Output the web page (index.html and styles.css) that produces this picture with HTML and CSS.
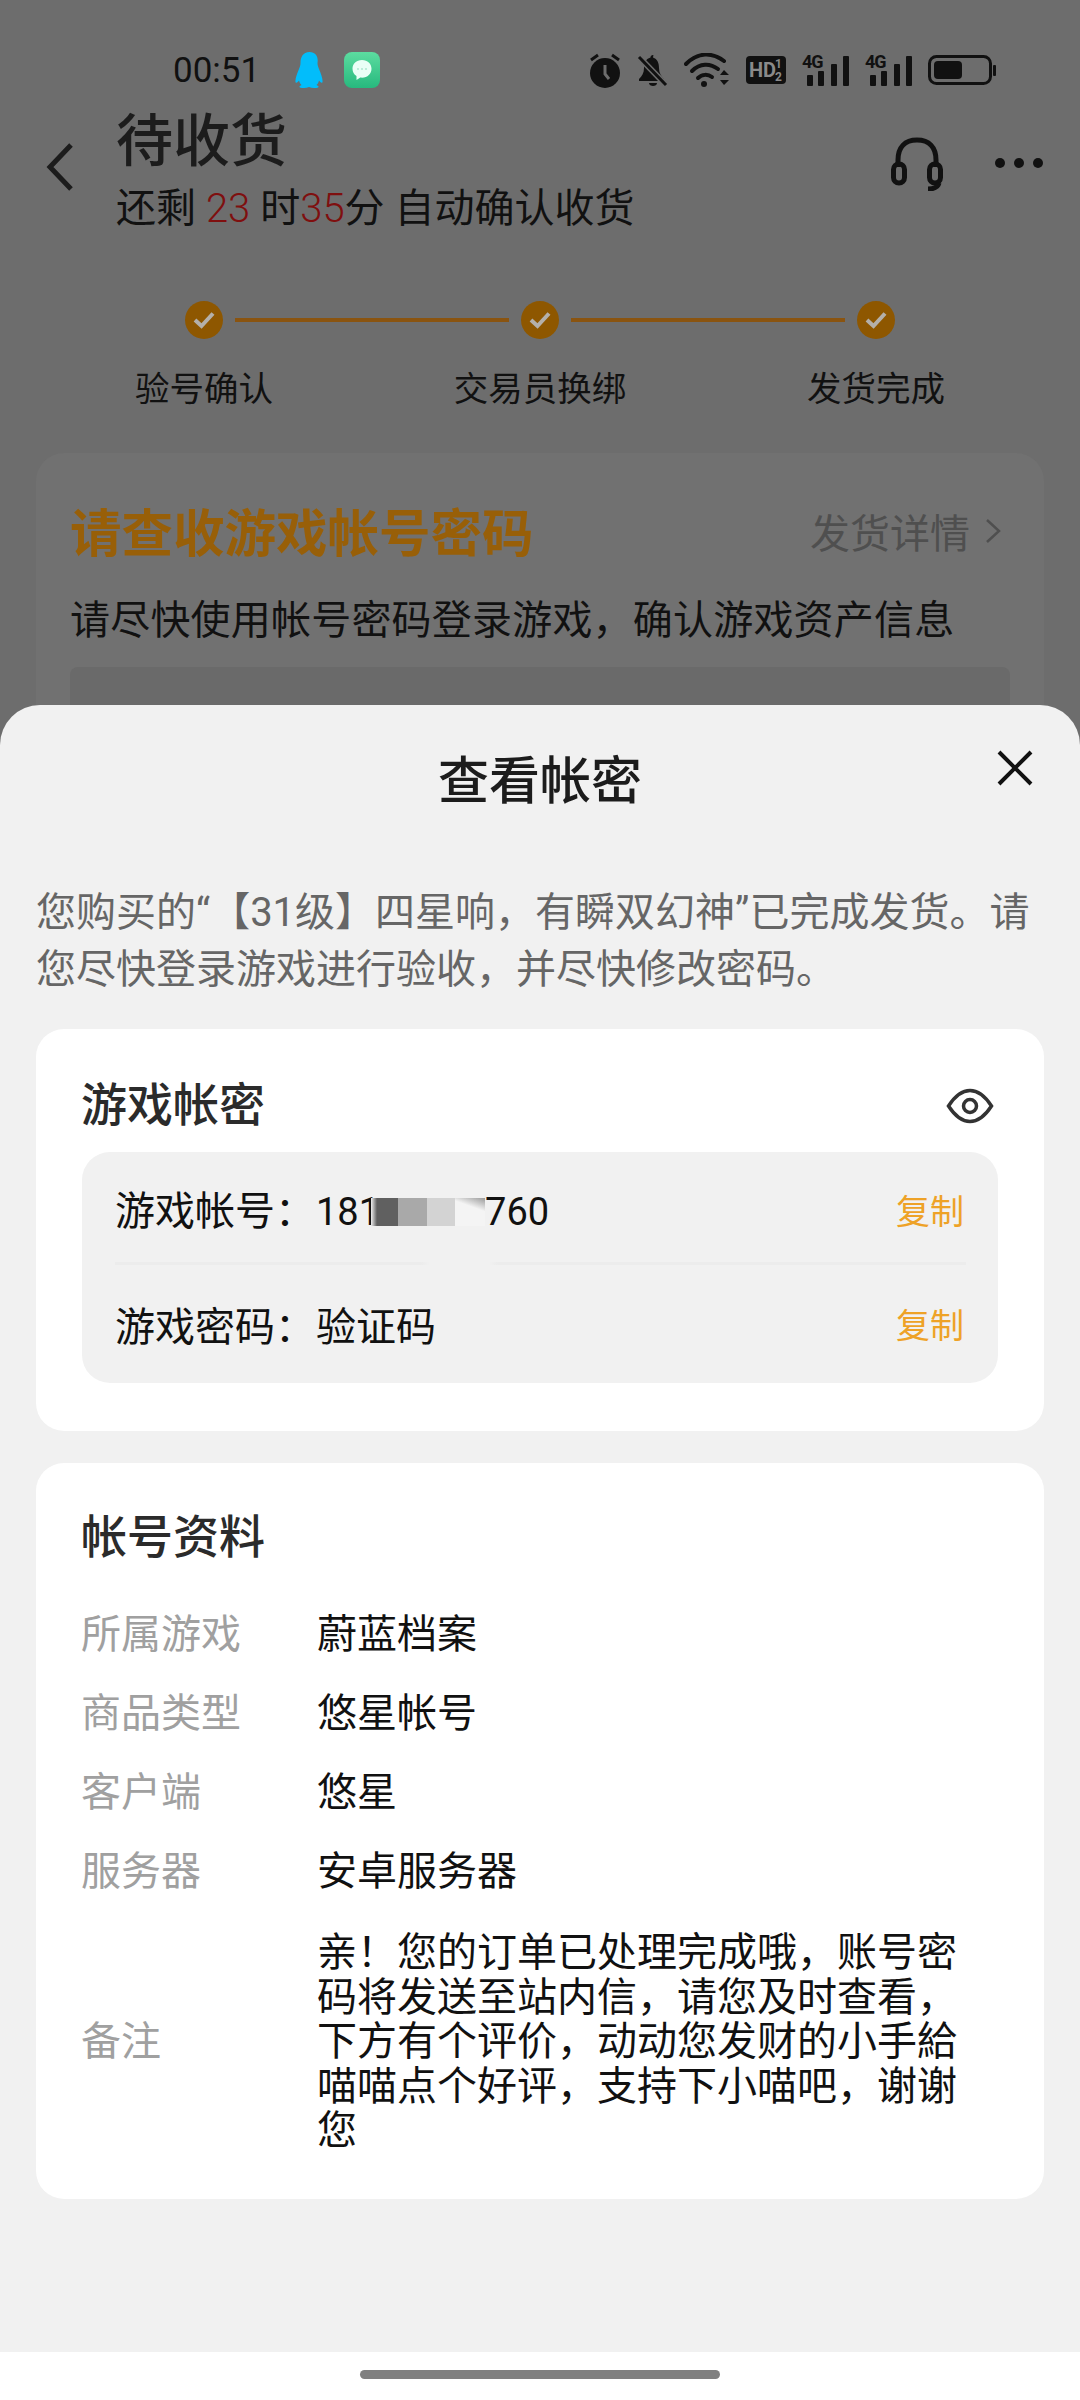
FILE: index.html
```html
<!DOCTYPE html>
<html lang="zh">
<head>
  <meta charset="utf-8">
  <title>查看帐密</title>
  <link rel="stylesheet" href="styles.css">
</head>
<body>
  <div class="page">
    <div class="backdrop">
      <div class="status">
        <span class="time">00:51</span>
        <svg class="qq" width="29" height="36" viewBox="0 0 29 36"><path fill="#02bdfb" d="M14.5 0C8 0 5.5 5 5.5 11c0 2-.5 3.5-1.500 6C2 22 0 27 .5 30c.5 2 2.500 0 3.500-1.500.5 2 1 3 2.500 4.500-2 1-3 2-1 2.700 3 .6 6 .3 8.500-.7 2.500 1 5.500 1.300 8.500.7 2-.7 1-1.700-1-2.700 1.500-1.500 2-2.500 2.500-4.500 1 1.500 3 3.500 3.500 1.500.5-3-1.500-8-3.500-13-1-2.500-1.500-4-1.500-6C23.500 5 21 0 14.500 0z"/></svg>
        <svg class="msg" width="36" height="36" viewBox="0 0 36 36">
          <defs><linearGradient id="msgGreen" x1="0" y1="0" x2="0" y2="1"><stop offset="0" stop-color="#5cdca0"/><stop offset="1" stop-color="#27b97e"/></linearGradient></defs>
          <rect width="36" height="36" rx="8" fill="url(#msgGreen)"/>
          <path fill="#eafff6" d="M18 8c-5.600 0-9.500 3.900-9.500 8.800 0 3.200 1.500 5.700 4 7.300v4l3.800-2.500c.5.100 1.100.100 1.700.100 5.600 0 9.500-3.900 9.500-8.900S23.600 8 18 8z"/>
          <circle cx="14" cy="17" r=".9" fill="#a9e6cc"/><circle cx="18" cy="17" r=".9" fill="#a9e6cc"/><circle cx="22" cy="17" r=".9" fill="#a9e6cc"/>
        </svg>
        <span class="status-gap"></span>
        <svg width="32" height="35" viewBox="0 0 32 35" fill="#111"><circle cx="16" cy="20" r="15"/><path d="M2 7l7-5M30 7l-7-5" stroke="#111" stroke-width="3" fill="none"/><path d="M16 12v9l4 5" stroke="#6d6d6d" stroke-width="3" fill="none"/></svg>
        <svg width="31" height="35" viewBox="0 0 31 35" fill="#111"><path d="M16 2c-1.500 0-2.500 1-2.500 2.500C8.500 6 7 10 7 15c0 5-2 8-5 11v2h25v-2c-3-3-5-6-5-11 0-5-1.500-9-6-10.500C16 3 17 2 16 2z"/><path d="M12 30h8c0 4-8 4-8 0z"/><path d="M2 4l27 28" stroke="#6d6d6d" stroke-width="6"/><path d="M2 4l27 28" stroke="#111" stroke-width="3"/></svg>
        <svg width="46" height="34" viewBox="0 0 46 34" fill="none" stroke="#111" stroke-linecap="round" stroke-width="4"><path d="M2 11C14-1 28-1 40 8"/><path d="M8 18c8-8 18-8 26-2"/><path d="M14 25c4-4 10-4 14-1"/><circle cx="20" cy="31" r="3" fill="#111" stroke="none"/><path d="M36 22l4-5 5 5zM36 27l4 5 5-5z" fill="#111" stroke="none"/></svg>
        <svg width="40" height="28" viewBox="0 0 40 28"><rect width="40" height="28" rx="4" fill="#111"/><text class="ico-hd" x="3" y="21">HD</text><text class="ico-half" x="29" y="12">1</text><text class="ico-half" x="29" y="25">2</text></svg>
        <div class="sig">
          <span class="sig-label">4G</span>
          <svg width="47" height="31" viewBox="0 0 47 31" fill="#111"><rect x="5" y="20" width="6" height="11" rx="1"/><rect x="16" y="16" width="6" height="15" rx="1"/><rect x="29" y="9" width="6" height="22" rx="1"/><rect x="41" y="1" width="6" height="30" rx="1"/></svg>
        </div>
        <div class="sig">
          <span class="sig-label">4G</span>
          <svg width="47" height="31" viewBox="0 0 47 31" fill="#111"><rect x="5" y="20" width="6" height="11" rx="1"/><rect x="16" y="16" width="6" height="15" rx="1"/><rect x="29" y="9" width="6" height="22" rx="1"/><rect x="41" y="1" width="6" height="30" rx="1"/></svg>
        </div>
        <svg width="68" height="30" viewBox="0 0 68 30"><rect x="1.500" y="1.500" width="61" height="27" rx="7" fill="none" stroke="#111" stroke-width="3"/><rect x="6" y="6" width="28" height="18" rx="4" fill="#111"/><rect x="65" y="10" width="3" height="11" rx="1" fill="#111"/></svg>
      </div>

      <div class="topbar">
        <svg class="back" width="28" height="50" viewBox="0 0 28 50"><path d="M25 3L4 25l21 22" fill="none" stroke="#1c1c1c" stroke-width="5"/></svg>
        <div class="topbar-text">
          <div class="order-state">待收货</div>
          <div class="countdown">还剩 <em>23</em> 时<em>35</em>分 自动确认收货</div>
        </div>
        <svg class="headset" width="54" height="54" viewBox="0 0 54 54" fill="none" stroke="#111"><path d="M8 30V23C8 10 15 3 27 3s19 7 19 20v7" stroke-width="5"/><rect x="3.500" y="27" width="11" height="19" rx="5.500" stroke-width="5"/><rect x="39.500" y="27" width="11" height="19" rx="5.500" stroke-width="5"/><path d="M49 46c-1 4-5 6-11 6" stroke-width="5"/></svg>
        <div class="more"><i></i><i></i><i></i></div>
      </div>

      <div class="track">
        <span class="tick"><svg width="22" height="18" viewBox="0 0 22 18"><path d="M2 9l6.500 6L20 2.500" fill="none" stroke="#b4b0aa" stroke-width="4"/></svg></span>
        <span class="track-line"></span>
        <span class="tick"><svg width="22" height="18" viewBox="0 0 22 18"><path d="M2 9l6.500 6L20 2.500" fill="none" stroke="#b4b0aa" stroke-width="4"/></svg></span>
        <span class="track-line"></span>
        <span class="tick"><svg width="22" height="18" viewBox="0 0 22 18"><path d="M2 9l6.500 6L20 2.500" fill="none" stroke="#b4b0aa" stroke-width="4"/></svg></span>
      </div>
      <div class="track-labels">
        <span>验号确认</span>
        <span>交易员换绑</span>
        <span>发货完成</span>
      </div>

      <div class="dim-card">
        <div class="dim-card-head">
          <span class="dim-title">请查收游戏帐号密码</span>
          <span class="dim-link">发货详情
            <svg width="16" height="26" viewBox="0 0 16 26"><path d="M2 2l12 11L2 24" fill="none" stroke="#4f4f4f" stroke-width="2.500"/></svg>
          </span>
        </div>
        <div class="dim-text">请尽快使用帐号密码登录游戏，确认游戏资产信息</div>
        <div class="dim-box"></div>
      </div>
    </div>

    <div class="sheet">
      <div class="sheet-head">
        <span></span>
        <h1>查看帐密</h1>
        <svg class="close" width="36" height="36" viewBox="0 0 36 36"><path d="M2 2l32 32M34 2L2 34" stroke="#111" stroke-width="4"/></svg>
      </div>
      <p class="notice">您购买的“【31级】四星响，有瞬双幻神”已完成发货。请您尽快登录游戏进行验收，并尽快修改密码。</p>

      <section class="card">
        <div class="card-head">
          <h2>游戏帐密</h2>
          <svg class="eye" width="48" height="36" viewBox="0 0 48 36" fill="none" stroke="#333" stroke-width="3.500"><path d="M2.500 18C9 8 16 2.500 24 2.500S39 8 45.500 18C39 28 32 33.500 24 33.500S9 28 2.500 18z"/><circle cx="24" cy="18" r="6.500"/></svg>
        </div>
        <div class="cred-box">
          <div class="cred-row first">
            <span class="cred-text">游戏帐号：<span class="digits">181<span class="mosaic"><i class="m1"></i><i class="m2"></i><i class="m3"></i><i class="m4"></i></span>760</span></span>
            <span class="copy">复制</span>
          </div>
          <div class="cred-row">
            <span class="cred-text">游戏密码：<span>验证码</span></span>
            <span class="copy">复制</span>
          </div>
        </div>
      </section>

      <section class="card info">
        <h2>帐号资料</h2>
        <div class="info-row"><span class="info-label">所属游戏</span><span class="info-value">蔚蓝档案</span></div>
        <div class="info-row"><span class="info-label">商品类型</span><span class="info-value">悠星帐号</span></div>
        <div class="info-row"><span class="info-label">客户端</span><span class="info-value">悠星</span></div>
        <div class="info-row"><span class="info-label">服务器</span><span class="info-value">安卓服务器</span></div>
        <div class="info-row note"><span class="info-label">备注</span><span class="info-value">亲！您的订单已处理完成哦，账号密码将发送至站内信，请您及时查看，下方有个评价，动动您发财的小手給喵喵点个好评，支持下小喵吧，谢谢您</span></div>
      </section>
    </div>

    <div class="navbar"><span class="home-bar"></span></div>
  </div>
</body>
</html>
```

FILE: styles.css
```css
* {
  box-sizing: border-box;
}

body {
  margin: 0;
  font-family: Roboto, "Noto Sans CJK SC", sans-serif;
  color: #111;
  text-spacing-trim: space-all;
}

h1, h2, p {
  margin: 0;
  font-weight: 500;
}

.page {
  width: 1080px;
  height: 2400px;
  overflow: hidden;
  display: flex;
  flex-direction: column;
  background: #fff;
}

/* dimmed order page behind the sheet */
.backdrop {
  height: 745px;
  flex: none;
  overflow: hidden;
  background: #6d6d6d;
}

.status {
  height: 112px;
  padding: 28px 84px 0 173px;
  display: flex;
  align-items: center;
  gap: 16px;
}

.time {
  font-size: 35px;
  width: 106px;
}

.msg {
  margin-left: 4px;
}

.status-gap {
  flex: 1;
}

.ico-hd {
  font-family: Roboto, sans-serif;
  font-size: 20px;
  font-weight: 700;
  fill: #8a8a8a;
}

.ico-half {
  font-family: Roboto, sans-serif;
  font-size: 12px;
  font-weight: 700;
  fill: #8a8a8a;
}

.sig {
  width: 47px;
  height: 31px;
  position: relative;
}

.sig svg {
  display: block;
}

.sig-label {
  position: absolute;
  left: 0;
  top: -2px;
  font-size: 18px;
  line-height: 18px;
  font-weight: 700;
  letter-spacing: -1px;
}

.topbar {
  height: 118px;
  display: flex;
  align-items: flex-start;
  padding-left: 46px;
}

.back {
  margin-top: 30px;
}

.topbar-text {
  margin-left: 42px;
  flex: 1;
}

.order-state {
  font-size: 57px;
  line-height: 60px;
  font-weight: 500;
  color: #1c1c1c;
}

.countdown {
  margin-top: 12px;
  font-size: 40px;
  line-height: 50px;
}

.countdown em {
  font-style: normal;
  font-weight: 300;
  color: #7f0f0f;
}

.headset {
  margin-top: 25px;
  margin-right: 51px;
}

.more {
  display: flex;
  gap: 9px;
  margin-top: 46px;
  margin-right: 37px;
}

.more i {
  width: 10px;
  height: 10px;
  border-radius: 50%;
  background: #111;
}

.track {
  margin-top: 71px;
  padding: 0 185px;
  display: flex;
  align-items: center;
  gap: 12px;
}

.tick {
  width: 38px;
  height: 38px;
  flex: none;
  border-radius: 50%;
  background: #8e5700;
  display: flex;
  align-items: center;
  justify-content: center;
}

.track-line {
  flex: 1;
  height: 4px;
  background: #8a5410;
}

.track-labels {
  margin-top: 25px;
  padding: 0 36px;
  display: grid;
  grid-template-columns: repeat(3, 1fr);
  text-align: center;
  font-size: 34.500px;
  line-height: 50px;
}

.dim-card {
  margin: 39px 36px 0;
  padding: 48px 34px 0;
  height: 400px;
  background: #717171;
  border-radius: 28px;
}

.dim-card-head {
  display: flex;
  align-items: center;
  justify-content: space-between;
  height: 60px;
}

.dim-title {
  margin-top: -4px;
  font-size: 51.500px;
  font-weight: 700;
  color: #985f08;
}

.dim-link {
  font-size: 40px;
  color: #4f4f4f;
  display: flex;
  align-items: center;
  gap: 15px;
  margin-right: 9px;
}

.dim-text {
  margin-top: 32px;
  font-size: 40px;
  line-height: 56px;
  letter-spacing: .2px;
}

.dim-box {
  margin-top: 18px;
  height: 120px;
  background: #6a6a6a;
  border-radius: 8px;
}

/* bottom sheet */
.sheet {
  margin-top: -40px;
  height: 1647px;
  flex: none;
  padding: 0 36px;
  background: #f1f1f1;
  border-radius: 40px 40px 0 0;
}

.sheet-head {
  height: 148px;
  margin: 0 -36px;
  display: grid;
  grid-template-columns: 1fr auto 1fr;
  align-items: center;
}

.sheet-head h1 {
  margin-top: 6px;
  font-size: 51px;
  line-height: 60px;
  color: #1c1c1c;
}

.close {
  justify-self: end;
  margin: -22px 47px 0 0;
}

.notice {
  margin-top: 31px;
  font-size: 40px;
  line-height: 57px;
  font-weight: 400;
  color: #666;
}

.card {
  margin-top: 31px;
  height: 402px;
  padding: 44px 46px 0 45px;
  background: #fff;
  border-radius: 28px;
}

.card h2 {
  font-size: 46px;
  line-height: 60px;
  color: #2b2b2b;
}

.card-head {
  height: 60px;
  display: flex;
  justify-content: space-between;
  align-items: center;
}

.card-head h2 {
  margin-top: 3px;
}

.eye {
  margin-right: 4px;
  margin-top: 6px;
}

.cred-box {
  margin: 19px 0 0 1px;
  height: 231px;
  padding: 0 32px 0 33px;
  background: #f1f1f1;
  border-radius: 28px;
}

.cred-row {
  height: 119px;
  padding-bottom: 2px;
  display: flex;
  align-items: center;
  justify-content: space-between;
  font-size: 40px;
}

.cred-row.first {
  height: 113px;
  padding: 1px 0 0;
  border-bottom: 3px solid;
  border-image: linear-gradient(90deg, #ececec 0, #ececec 36%, #f1f1f1 37%, #f1f1f1 44%, #ececec 45%, #ececec 100%) 1;
}

.cred-row.first .copy {
  margin-top: 4px;
}

.cred-text > span {
  margin-left: 1px;
}

.digits {
  font-size: 38px;
}

/* blurred part of the account number */
.mosaic {
  display: inline-flex;
  vertical-align: -1px;
  height: 28px;
  margin-left: -9px;
}

.mosaic i {
  display: block;
  height: 28px;
  width: 28px;
}

.mosaic .m1 {
  width: 27px;
  background: linear-gradient(90deg, #f1f1f1 0, #606060 6px);
}

.mosaic .m2 {
  width: 29px;
  background: #a9a9a9;
}

.mosaic .m3 {
  background: #d3d3d3;
}

.mosaic .m4 {
  width: 30px;
  background: linear-gradient(200deg, #9a9a9a 0, #f4f4f4 35%);
}

.copy {
  font-size: 34px;
  color: #eea227;
  padding-right: 2px;
}

.card.info {
  margin-top: 32px;
  height: 736px;
  padding-top: 44px;
}

.info h2 {
  margin-bottom: 24px;
}

.info-row {
  min-height: 79px;
  display: flex;
  align-items: center;
  font-size: 40px;
}

.info-label {
  width: 236px;
  flex: none;
  color: #a0a0a0;
}

.info-value {
  color: #111;
}

.info-row.note {
  margin-top: 24px;
  line-height: 44.500px;
}

.info-row.note .info-value {
  width: 644px;
}

.navbar {
  flex: 1;
  display: flex;
  justify-content: center;
  padding-top: 18px;
}

.home-bar {
  width: 360px;
  height: 9px;
  border-radius: 5px;
  background: #808080;
}
```
